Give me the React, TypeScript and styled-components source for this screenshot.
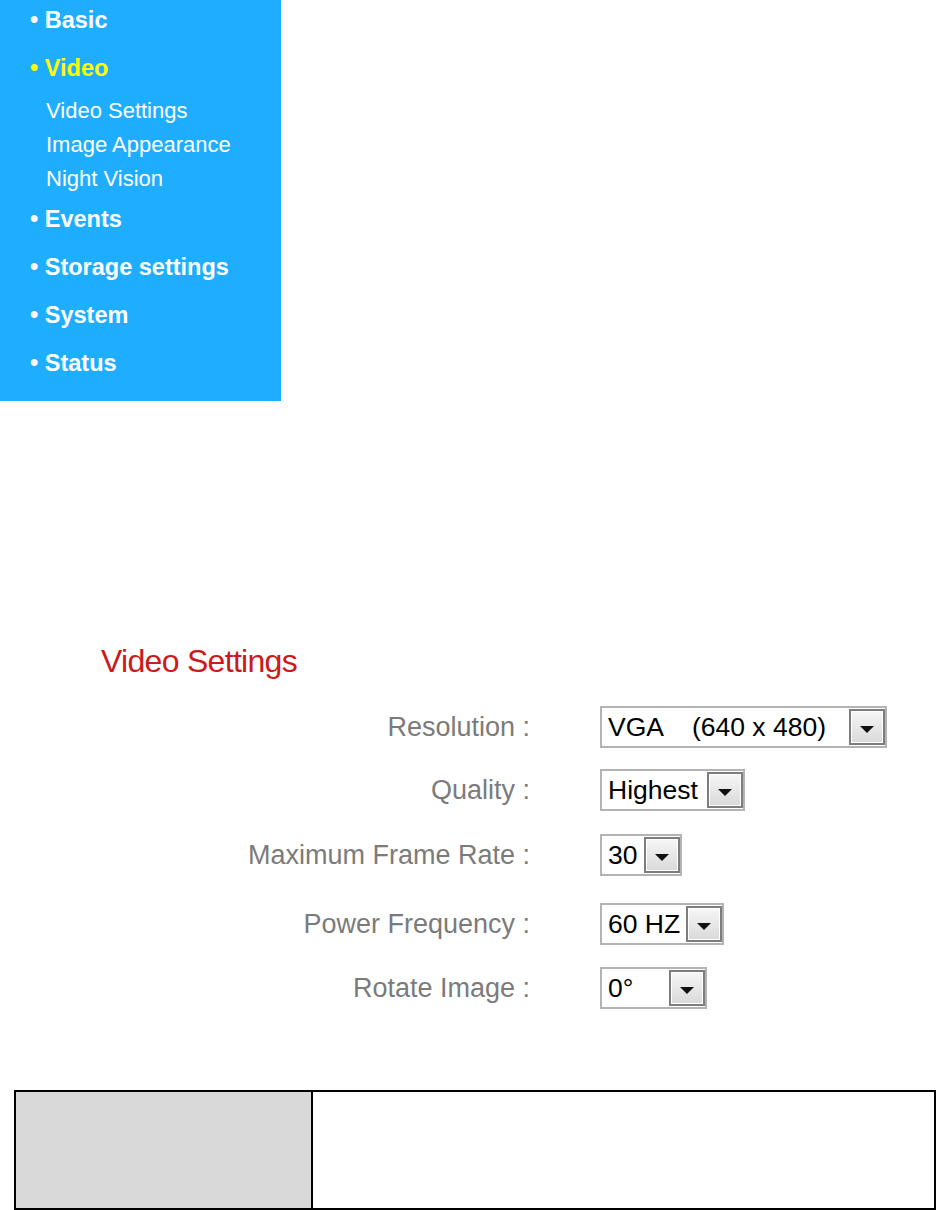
import React from "react";
import styled, { createGlobalStyle } from "styled-components";

const GlobalStyle = createGlobalStyle`
  html, body {
    margin: 0;
    padding: 0;
    background: #ffffff;
  }
  body {
    font-family: "Liberation Sans", Arial, sans-serif;
  }
`;

const Page = styled.div`
  width: 936px;
  display: flex;
  flex-direction: column;
`;

const Sidebar = styled.nav`
  width: 281px;
  height: 401px;
  background: #1faeff;
  display: flex;
  flex-direction: column;
  box-sizing: border-box;
`;

const NavItem = styled.div<{ $active?: boolean }>`
  font-weight: 700;
  font-size: 23.5px;
  line-height: 40px;
  height: 40px;
  padding-left: 30px;
  margin-bottom: 8px;
  white-space: pre;
  color: ${(p) => (p.$active ? "#ffff00" : "#ffffff")};
`;

const SubList = styled.div`
  display: flex;
  flex-direction: column;
  margin-top: -2px;
  margin-bottom: 3px;
  padding-left: 46px;
`;

const SubItem = styled.div`
  font-size: 22px;
  line-height: 34px;
  height: 34px;
  color: #ffffff;
`;

const Heading = styled.h2`
  margin: 242px 0 0;
  padding-left: 101px;
  font-weight: 400;
  font-size: 32px;
  line-height: 37px;
  letter-spacing: -0.7px;
  color: #cc1a1a;
`;

const Form = styled.div`
  margin-top: 26px;
  display: flex;
  flex-direction: column;
`;

const Row = styled.div<{ $gap: number }>`
  display: grid;
  grid-template-columns: 530px auto;
  justify-content: start;
  column-gap: 70px;
  align-items: center;
  height: 42px;
  margin-top: ${(p) => p.$gap}px;
`;

const Label = styled.div`
  text-align: right;
  font-size: 27px;
  line-height: 42px;
  color: #7b7b7b;
  white-space: pre;
`;

const Select = styled.div<{ $w: number }>`
  width: ${(p) => p.$w}px;
  height: 42px;
  box-sizing: border-box;
  border: 2px solid #b3b3b3;
  background: #ffffff;
  display: flex;
  align-items: center;
  justify-content: space-between;
`;

const SelectText = styled.span`
  padding-left: 6px;
  font-size: 26.5px;
  line-height: 38px;
  color: #000000;
  white-space: pre;
`;

const DropButton = styled.span`
  width: 36px;
  height: 36px;
  box-sizing: border-box;
  flex-shrink: 0;
  border: 2px solid #7d7d7d;
  box-shadow: inset 0 0 0 1px #ffffff;
  background: linear-gradient(#f7f7f7, #d9d9d9);
  display: flex;
  align-items: center;
  justify-content: center;

  &::after {
    content: "";
    width: 0;
    height: 0;
    margin-top: 4px;
    border-left: 7px solid transparent;
    border-right: 7px solid transparent;
    border-top: 7px solid #111111;
  }
`;

const Table = styled.div`
  margin: 81px 0 0 14px;
  width: 922px;
  height: 120px;
  box-sizing: border-box;
  border: 2px solid #000000;
  display: grid;
  grid-template-columns: 297px 1fr;
`;

const HeadCell = styled.div`
  background: #d9d9d9;
  border-right: 2px solid #000000;
`;

const BodyCell = styled.div`
  background: #ffffff;
`;

const rows = [
  { label: "Resolution :", value: "VGA    (640 x 480)", width: 287, gap: 0 },
  { label: "Quality :", value: "Highest", width: 145, gap: 21 },
  { label: "Maximum Frame Rate :", value: "30", width: 82, gap: 23 },
  { label: "Power Frequency :", value: "60 HZ", width: 124, gap: 27 },
  { label: "Rotate Image :", value: "0°", width: 107, gap: 22 },
];

export default function App() {
  return (
    <Page>
      <GlobalStyle />
      <Sidebar>
        <NavItem>• Basic</NavItem>
        <NavItem $active>• Video</NavItem>
        <SubList>
          <SubItem>Video Settings</SubItem>
          <SubItem>Image Appearance</SubItem>
          <SubItem>Night Vision</SubItem>
        </SubList>
        <NavItem>• Events</NavItem>
        <NavItem>• Storage settings</NavItem>
        <NavItem>• System</NavItem>
        <NavItem>• Status</NavItem>
      </Sidebar>

      <Heading>Video Settings</Heading>

      <Form>
        {rows.map((r) => (
          <Row key={r.label} $gap={r.gap}>
            <Label>{r.label}</Label>
            <Select $w={r.width}>
              <SelectText>{r.value}</SelectText>
              <DropButton />
            </Select>
          </Row>
        ))}
      </Form>

      <Table>
        <HeadCell />
        <BodyCell />
      </Table>
    </Page>
  );
}
